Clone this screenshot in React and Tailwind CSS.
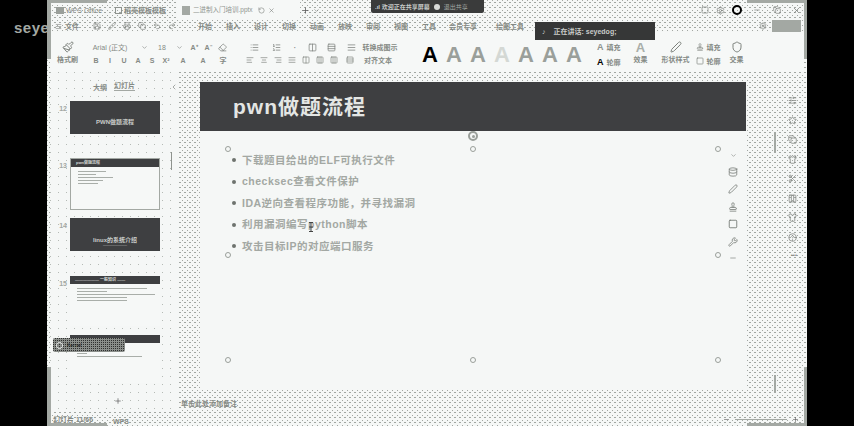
import React from "react";
import { Paintbrush, ChevronDown, Eraser, List, ListOrdered, AlignLeft, AlignCenter, AlignRight, AlignJustify, Columns2, Rows3, Save, Printer, Undo2, Redo2, Plus, X, Minus, Square, Pen, Stamp, Wrench, Star, Copy, Shirt, Scissors, Columns3, HelpCircle, SlidersHorizontal, Database, Settings, Shield, RotateCcw, ChevronLeft, Menu } from "lucide-react";

const font = { fontFamily: '"Liberation Sans","Noto Sans CJK SC",sans-serif' };
const dither = "bg-[#f5f7f6] bg-[radial-gradient(circle_at_0.5px_0.5px,#a2a7a2_0.6px,transparent_0.7px),radial-gradient(circle_at_3px_2.5px,#a2a7a2_0.6px,transparent_0.7px)] bg-[size:5px_5px]";
const sparse = "bg-[#f5f7f6] bg-[radial-gradient(circle_at_0.5px_0.5px,#b5bab5_0.6px,transparent_0.7px)] bg-[size:8px_8px]";

const I = ({ C, s = 11, c = "text-[#7d827d]" }) => <C size={s} className={c} strokeWidth={2} />;

const menu = ["开始", "插入", "设计", "切换", "动画", "放映", "审阅", "视图", "工具"];

function Cell({ w, children }) {
  return <div style={{ width: w }} className="flex shrink-0 items-center justify-center">{children}</div>;
}
const T = ({ children, cls = "" }) => <span className={`text-[7px] leading-none font-bold whitespace-nowrap text-[#858a85] ${cls}`}>{children}</span>;

function WordArt() {
  const colors = ["text-black", "text-[#9a9f9a]", "text-[#9a9f9a]", "text-[#d4d8d4]", "text-[#9a9f9a]", "text-[#9a9f9a]", "text-[#9a9f9a]"];
  return (
    <div className="flex items-center">
      {colors.map((c, i) => (
        <span key={i} className={`w-[24px] text-center text-[22px] leading-none font-bold ${c}`}>A</span>
      ))}
    </div>
  );
}

function Ribbon() {
  return (
    <div className="mx-[3px] flex h-[40px] shrink-0 bg-[#f6f8f7]">
      <div className="flex w-[35px] shrink-0 flex-col items-center pt-[9px]">
        <I C={Paintbrush} s={12} />
        <T cls="mt-[3px]">格式刷</T>
      </div>
      <div className="flex w-[155px] shrink-0 flex-col pt-[8.5px]">
        <div className="flex h-[13px] items-center">
          <Cell w={50}><T cls="font-normal">Arial (正文)</T></Cell>
          <Cell w={18}><I C={ChevronDown} s={7} /></Cell>
          <Cell w={18}><T cls="font-normal">18</T></Cell>
          <Cell w={16}><I C={ChevronDown} s={7} /></Cell>
          <Cell w={14}><T>A⁺</T></Cell>
          <Cell w={14}><T>A⁻</T></Cell>
          <Cell w={14}><I C={Eraser} s={9} /></Cell>
        </div>
        <div className="flex h-[13px] items-center pl-[4px]">
          {["B", "I", "U", "A", "S", "X²", "A", "A", "字"].map((t, i) => (
            <Cell key={i} w={i > 5 ? 20 : 14}><T>{t}</T></Cell>
          ))}
        </div>
      </div>
      <div className="flex w-[168px] shrink-0 flex-col pt-[8.5px] pl-[3px]">
        <div className="flex h-[13px] items-center">
          <Cell w={22}><I C={List} s={9} /></Cell>
          <Cell w={22}><I C={ListOrdered} s={9} /></Cell>
          <Cell w={16}><T>·</T></Cell>
          <Cell w={18}><I C={Columns2} s={9} /></Cell>
          <Cell w={20}><I C={Rows3} s={9} /></Cell>
          <Cell w={20}><I C={AlignJustify} s={9} /></Cell>
          <Cell w={38}><T>转换成图示</T></Cell>
        </div>
        <div className="flex h-[13px] items-center">
          {[AlignLeft, AlignCenter, AlignRight, AlignJustify, Columns2, Columns3, Columns3, Rows3].map((C, i) => (
            <Cell key={i} w={i === 7 ? 18 : 14}><I C={C} s={8} /></Cell>
          ))}
          <Cell w={38}><T>对齐文本</T></Cell>
        </div>
      </div>
      <div className="ml-[10px] flex w-[179px] shrink-0 items-center pt-[5px]"><WordArt /></div>
      <div className="flex flex-col gap-[6px] pt-[11px]">
        <div className="flex items-center gap-[3px]"><span className="text-[9px] leading-none font-bold text-[#8e938e]">A</span><T>填充</T></div>
        <div className="flex items-center gap-[3px]"><span className="text-[9px] leading-none font-bold text-black">A</span><T>轮廓</T></div>
      </div>
      <div className="ml-[13px] flex flex-col items-center pt-[9px]">
        <span className="text-[13px] leading-none font-bold text-[#a9aea9]">A</span>
        <T cls="mt-[2px]">效果</T>
      </div>
      <div className="ml-[14px] flex flex-col items-center pt-[9px]">
        <I C={Pen} s={12} />
        <T cls="mt-[3px]">形状样式</T>
      </div>
      <div className="ml-[6px] flex flex-col gap-[6px] pt-[11px]">
        <div className="flex items-center gap-[3px]"><I C={Stamp} s={8} /><T>填充</T></div>
        <div className="flex items-center gap-[3px]"><I C={Square} s={8} /><T>轮廓</T></div>
      </div>
      <div className="ml-[9px] flex flex-col items-center pt-[9px]">
        <I C={Shield} s={12} />
        <T cls="mt-[3px]">交果</T>
      </div>
    </div>
  );
}

function Thumb({ n, h, mt, dark, title, sub, framed, lines = [], headH = 8, pt = 18 }) {
  return (
    <div style={{ marginTop: mt }} className="flex shrink-0">
      <span className="w-[18px] pr-[3px] pt-[4px] text-right text-[7px] leading-none font-bold text-[#a3a8a3]">{n}</span>
      <div style={{ height: h, paddingTop: dark ? pt : 0 }} className={`w-[90px] shrink-0 overflow-hidden ${dark ? "flex flex-col items-center bg-[#3e3f41]" : "bg-[#f6f8f7]"} ${framed ? "border border-[#a3a8a3]" : ""}`}>
        {dark ? (
          <>
            <span className="text-[6px] leading-none font-bold whitespace-nowrap text-[#c9ccc9]">{title}</span>
            {sub && <span className="mt-[1px] text-[3px] leading-none text-[#c9ccc9]">{sub}</span>}
          </>
        ) : (
          <>
            <div style={{ height: headH }} className="flex items-center bg-[#3e3f41] pl-[5px]">
              <span className="text-[4px] leading-none font-bold whitespace-nowrap text-[#d5d8d5]">{title}</span>
            </div>
            <div className="flex flex-col gap-[2px] pt-[4px] pl-[7px]">
              {lines.map((w, i) => <div key={i} style={{ width: w }} className="h-px bg-[#a9aea9]" />)}
            </div>
          </>
        )}
      </div>
    </div>
  );
}

function Handle({ cls }) {
  return <span className={`absolute size-[6px] rounded-full border border-[#9a9f9a] bg-[#f6f8f7] ${cls}`} />;
}

function Slide() {
  const items = ["下载题目给出的ELF可执行文件", "checksec查看文件保护", "IDA逆向查看程序功能，并寻找漏洞", "利用漏洞编写python脚本", "攻击目标IP的对应端口服务"];
  return (
    <div className="relative ml-[19px] flex h-[306px] w-[546px] shrink-0 flex-col bg-[#f5f7f6]">
      <div className="flex h-[49px] items-center bg-[#3e3f41] pl-[33px]">
        <span className="text-[21px] leading-none font-bold tracking-[1px] text-[#e4e6e4]">pwn做题流程</span>
      </div>
      <ul className="flex flex-col gap-[5.5px] pt-[21px] pl-[32px]">
        {items.map((t) => (
          <li key={t} className="flex h-[16px] items-center">
            <span className="mr-[6px] size-[4px] rounded-full bg-[#6e736e]" />
            <span className="text-[10.5px] leading-none font-bold tracking-[0.5px] text-[#a3a8a3]">{t}</span>
          </li>
        ))}
      </ul>
      <Handle cls="left-[25px] top-[64px]" />
      <Handle cls="left-[270px] top-[64px]" />
      <Handle cls="left-[515px] top-[64px]" />
      <Handle cls="left-[25px] top-[170px]" />
      <Handle cls="left-[515px] top-[170px]" />
      <Handle cls="left-[25px] top-[275px]" />
      <Handle cls="left-[270px] top-[275px]" />
      <Handle cls="left-[515px] top-[275px]" />
      <span className="absolute left-[268px] top-[49px] flex size-[10px] items-center justify-center rounded-full border-2 border-[#9a9f9a]"><span className="size-[3px] rounded-full bg-[#9a9f9a]" /></span>
      <svg className="absolute left-[108px] top-[140px]" width="6" height="10" viewBox="0 0 6 10">
        <path d="M1 .5h4M3 .5v9M1 9.5h4M1 5h4" stroke="#444" fill="none" />
      </svg>
      <div className="absolute left-[528px] top-[70px] flex flex-col items-center gap-[7.5px]">
        <I C={ChevronDown} s={7} />
        <I C={Database} s={10} />
        <I C={Pen} s={10} />
        <I C={Stamp} s={10} />
        <I C={Square} s={10} c="text-[#6e736e]" />
        <I C={Wrench} s={10} />
        <I C={Minus} s={8} />
      </div>
    </div>
  );
}

export default function App() {
  return (
    <div style={font} className="flex h-[426px] w-[854px] overflow-hidden bg-black">
      <div className="relative w-[47px] shrink-0">
        <span className="absolute left-[14px] top-[20px] z-10 text-[15px] leading-none font-bold tracking-[0.5px] whitespace-nowrap text-[#a3a8a3]">seye</span>
      </div>

      <div className={`relative flex w-[760px] shrink-0 flex-col overflow-hidden ${dither}`}>
        {/* tabs */}
        <div className="flex h-[20px] shrink-0 items-end">
          <div className="flex h-[20px] w-[65px] items-center gap-[2px] pl-[9px]"><span className="h-[7px] w-[8px] bg-[#9a9f9a]" /><T cls="font-normal">WPS Office</T></div>
          <div className="ml-[3px] flex h-[20px] w-[62px] items-center gap-[2px]"><span className="size-[7px] border border-[#8e938e]" /><T>稻壳模板模板</T></div>
          <div className="flex h-[20px] w-[123px] items-center gap-[3px] bg-[#f6f8f7] pl-[5px]">
            <span className="h-[9px] w-[8px] bg-[#a3a8a3]" />
            <span className="w-[62px] text-[6.5px] leading-none whitespace-nowrap text-[#8e938e]">二进制入门培训.pptx</span>
            <I C={RotateCcw} s={7} />
            <I C={X} s={7} />
          </div>
          <div className="flex h-[20px] items-center gap-[3px] pl-[1px]"><I C={Plus} s={9} c="text-[#555]" /><I C={ChevronDown} s={7} /></div>
          <div className="ml-auto flex h-[20px] items-center pr-[6px]">
            <I C={Square} s={8} />
            <span className="ml-[7px]"><I C={Settings} s={9} /></span>
            <span className="ml-[7px] size-[10px] rounded-full border-[2px] border-black" />
            <span className="ml-[11px]"><I C={Minus} s={8} /></span>
            <span className="ml-[12px]"><I C={Copy} s={8} /></span>
            <span className="ml-[11px]"><I C={X} s={9} /></span>
          </div>
        </div>
        {/* menu */}
        <div className="flex h-[12px] shrink-0 items-center pl-[8px]">
          <I C={Menu} s={7} />
          <T cls="ml-[3px] w-[22px]">文件</T>
          <div className="ml-[6px] flex w-[102px] items-center gap-[7px]">
            <I C={Save} s={8} /><I C={Pen} s={8} /><I C={Printer} s={8} /><I C={Copy} s={8} /><I C={Undo2} s={8} /><I C={Redo2} s={8} />
          </div>
          {menu.map((t) => (
            <span key={t} className="mr-[8px] w-[20px] text-center text-[7px] leading-none font-bold whitespace-nowrap text-[#858a85]">{t}</span>
          ))}
          <span className="w-[32px] text-center text-[7px] leading-none font-bold whitespace-nowrap text-[#858a85]">会员专享</span>
          <span className="ml-[15px] w-[32px] text-center text-[7px] leading-none font-bold whitespace-nowrap text-[#858a85]">绘图工具</span>
          <div className="ml-auto mr-[6px] flex items-center gap-[5px]">
            <I C={Settings} s={8} />
            <span className="h-[13px] w-[29px] bg-[#a3a8a3]" />
          </div>
        </div>
        <Ribbon />

        {/* main */}
        <div className="flex min-h-0 flex-1">
          <div className={`mx-[3px] flex w-[128px] shrink-0 flex-col pl-[2px] ${sparse}`}>
            <div className="flex h-[20px] shrink-0 items-end justify-start gap-[7px] pb-[1px] pl-[41px]">
              <T>大纲</T><T cls="border-b border-[#a3a8a3] pb-[1px]">幻灯片</T>
              <span className="ml-[28px]"><I C={ChevronLeft} s={8} /></span>
            </div>
            <Thumb n="12" h={33} mt={9} dark pt={18} title="PWN做题流程" />
            <Thumb n="13" h={52} mt={24} framed title="pwn做题流程" lines={[28, 18, 35, 25, 20]} />
            <Thumb n="14" h={33} mt={8} dark pt={19} title="linux的系统介绍" sub="————————" />
            <Thumb n="15" h={50} mt={25} headH={8} title="—————— 一般知识 ——" lines={[70, 30, 78, 50, 50]} />
            <Thumb n="" h={48} mt={9} headH={8} title="" lines={[0, 10, 10, 65]} />
            <div className="mt-auto flex h-[19px] items-center justify-center pb-[4px] pl-[5px]"><I C={Plus} s={8} c="text-[#555]" /></div>
          </div>
          <div className="flex min-w-0 flex-1 flex-col">
            <div className="pt-[10px]"><Slide /></div>
            <div className="pt-[12px] text-[7px] leading-none font-bold text-[#858a85]">单击此处添加备注</div>
          </div>
          <div className="flex w-[48px] shrink-0 flex-col items-end gap-[10.5px] pt-[24px] pr-[10px]">
            {[SlidersHorizontal, Star, Copy, Shirt, Scissors, Columns3, Shirt, HelpCircle].map((C, i) => <I key={i} C={C} s={9} />)}
            <span className="text-[6px] leading-none font-bold text-[#7d827d]">•••</span>
          </div>
        </div>

        {/* status */}
        <div className="flex h-[14px] shrink-0 items-center pl-[6px]">
          <T cls="text-[6.5px]">幻灯片 11/66</T>
          <span className="ml-[20px]"><T>WPS</T></span>
          <div className="ml-auto mr-[8px] flex items-center gap-[5px]">
            <I C={Minus} s={7} c="text-[#555]" />
            <span className="h-px w-[52px] bg-[#a3a8a3]" />
            <I C={Plus} s={7} c="text-[#555]" />
          </div>
        </div>

        {/* grey window edge, scrollbars and overlays */}
        <span className="absolute left-0 top-0 h-[59px] w-[4px] bg-[#a3a8a3]" />
        <span className="absolute left-0 top-0 h-[3px] w-[60px] bg-[#a3a8a3]" />
        <span className="absolute bottom-0 left-0 h-[59px] w-[4px] bg-[#a3a8a3]" />
        <span className="absolute bottom-0 left-0 h-[3px] w-[60px] bg-[#a3a8a3]" />
        <span className="absolute right-0 top-0 h-[59px] w-[3px] bg-[#a3a8a3]" />
        <span className="absolute right-0 top-0 h-[3px] w-[60px] bg-[#a3a8a3]" />
        <span className="absolute right-0 bottom-0 h-[59px] w-[3px] bg-[#a3a8a3]" />
        <span className="absolute right-0 bottom-0 h-[3px] w-[60px] bg-[#a3a8a3]" />
        <span className="absolute left-[124px] top-[152px] h-[18px] w-px bg-[#8e938e]" />
        <span className="absolute left-[727px] top-[132px] h-[21px] w-[2px] bg-[#a3a8a3]" />
        <span className="absolute left-[727px] top-[375px] h-[18px] w-[2px] bg-[#a3a8a3]" />
        <div className="absolute left-[324px] top-0 flex h-[13px] w-[113px] items-center gap-[4px] rounded-b-[2px] bg-[#3a3b3b] px-[4px]">
          <span className="text-[6px] leading-none font-bold whitespace-nowrap text-[#c9ccc9]">.ıl 欢迎正在共享屏幕</span>
          <span className="size-[6px] rounded-sm bg-[#d8dad8]" />
          <span className="text-[6px] leading-none whitespace-nowrap text-[#a3a8a3]">退出共享</span>
        </div>
        <div className="absolute left-[488px] top-[22px] flex h-[18px] w-[120px] items-center gap-[8px] bg-[#363737] pl-[7px]">
          <span className="text-[7px] leading-none text-[#c9ccc9]">♪</span>
          <span className="text-[7px] leading-none font-bold whitespace-nowrap text-[#c9ccc9]">正在讲话: seyedog;</span>
        </div>
        <div className="absolute left-[6px] top-[338px] flex h-[14px] w-[72px] items-center gap-[4px] rounded-[2px] bg-[#8a8e8a] bg-[radial-gradient(circle_at_0.5px_0.5px,#2f302f_0.7px,transparent_0.8px)] bg-[size:2px_2px] pl-[3px]">
          <span className="size-[7px] rounded-sm border border-[#f4f6f5]" />
          <span className="text-[5px] leading-none whitespace-nowrap text-[#111]">Kernel</span>
        </div>
      </div>

      <div className="w-[47px] shrink-0" />
    </div>
  );
}
